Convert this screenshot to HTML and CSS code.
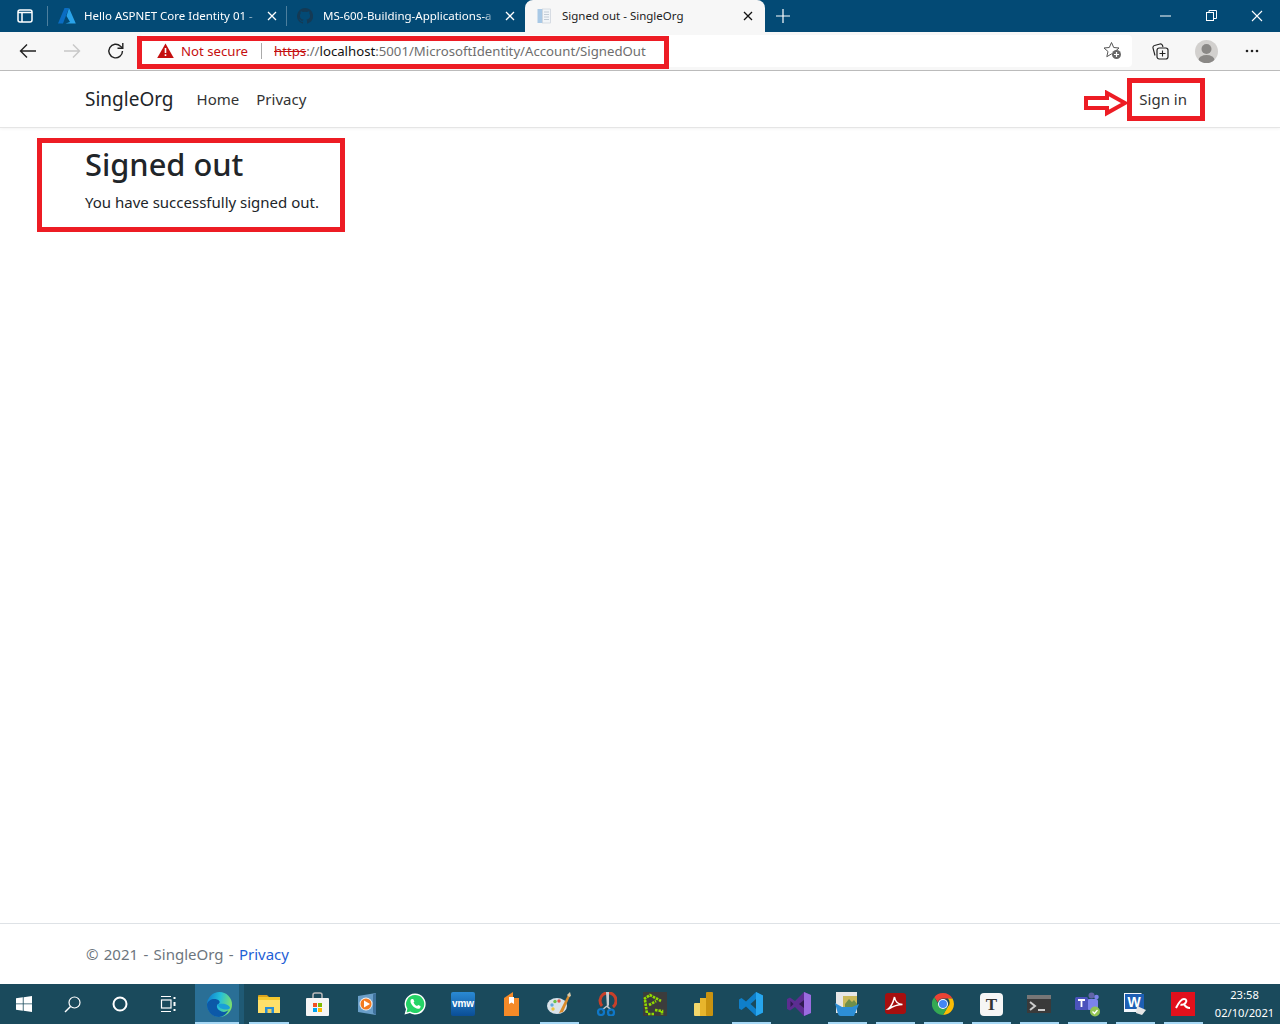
FILE: index.html
```html
<!DOCTYPE html>
<html lang="en">

<head>
	<meta charset="UTF-8">
	<title>Signed out - SingleOrg</title>
	<link rel="stylesheet" href="styles.css">
</head>

<body>
	<div class="tabstrip">
		<svg class="tabs-menu" width="16" height="14" viewBox="0 0 16 14"><rect x="1" y="1" width="14" height="12" rx="2" fill="none" stroke="#fff" stroke-width="1.5"/><path d="M1 3.5h14M5 3.5V13" stroke="#fff" stroke-width="1.5" fill="none"/></svg>
		<div class="tab-sep"></div>
		<div class="tab tab-first">
			<svg width="18" height="16" viewBox="0 0 18 16"><path d="M6.500 0h4.400L5 15.500H0z" fill="#0a6cc2"/><path d="M11 0l6.800 15.500H7.500L12 14 8.500 8z" fill="#2aa3ea"/></svg>
			<span class="tab-title tab-fade">Hello ASPNET Core Identity 01 -</span>
			<svg class="tab-close" width="10" height="10" viewBox="0 0 10 10"><path d="M1 1l8 8M9 1L1 9" stroke="#fff" stroke-width="1.300"/></svg>
		</div>
		<div class="tab-sep"></div>
		<div class="tab tab-second">
			<svg width="16" height="16" viewBox="0 0 16 16"><path d="M8 0a8 8 0 0 0-2.500 15.600c.4 0 .5-.2.5-.4v-1.400c-2.200.5-2.700-1-2.700-1-.4-.9-.9-1.200-.9-1.200-.7-.5.100-.5.100-.5.800.100 1.200.8 1.200.8.700 1.200 1.900.9 2.300.7.100-.5.300-.9.500-1.100-1.800-.2-3.600-.9-3.600-4 0-.9.300-1.600.8-2.100-.1-.2-.4-1 .1-2.100 0 0 .7-.2 2.200.8a7.600 7.600 0 0 1 4 0c1.500-1 2.200-.8 2.200-.8.400 1.100.2 1.900.1 2.100.5.600.8 1.300.8 2.100 0 3.100-1.900 3.800-3.700 4 .3.300.6.800.6 1.500v2.200c0 .2.100.5.600.4A8 8 0 0 0 8 0z" fill="#143a55"/></svg>
			<span class="tab-title tab-fade">MS-600-Building-Applications-a</span>
			<svg class="tab-close" width="10" height="10" viewBox="0 0 10 10"><path d="M1 1l8 8M9 1L1 9" stroke="#fff" stroke-width="1.300"/></svg>
		</div>
		<div class="tab tab-active">
			<svg width="16" height="16" viewBox="0 0 16 16"><rect x="0.500" y="1" width="5" height="14" fill="#a9c9e6"/><rect x="5.500" y="1" width="8" height="14" fill="#f2f5f8" stroke="#c3ccd6" stroke-width="0.600"/><path d="M7 4h5M7 6.500h5M7 9h5M7 11.500h5" stroke="#c3ccd6"/></svg>
			<span class="tab-title">Signed out - SingleOrg</span>
			<svg class="tab-close" width="10" height="10" viewBox="0 0 10 10"><path d="M1 1l8 8M9 1L1 9" stroke="#111" stroke-width="1.300"/></svg>
		</div>
		<svg class="new-tab" width="14" height="14" viewBox="0 0 14 14"><path d="M7 0v14M0 7h14" stroke="#fff" stroke-width="1.200"/></svg>
		<div class="window-controls">
			<svg width="46" height="14" viewBox="0 0 46 14"><path d="M1 7h11" stroke="#fff" stroke-width="1"/></svg>
			<svg width="46" height="14" viewBox="0 0 46 14"><rect x="1.500" y="3.500" width="7" height="8" fill="none" stroke="#fff"/><path d="M4 3.500V1.500h7.500v8H9" fill="none" stroke="#fff"/></svg>
			<svg width="12" height="14" viewBox="0 0 12 14"><path d="M1 2l10 10M11 2L1 12" stroke="#fff" stroke-width="1.100"/></svg>
		</div>
	</div>

	<div class="toolbar">
		<svg class="nav-icon" width="18" height="16" viewBox="0 0 18 16"><path d="M17 8H1.500M8 1.500L1.500 8 8 14.500" fill="none" stroke="#222" stroke-width="1.400"/></svg>
		<svg class="nav-icon" width="18" height="16" viewBox="0 0 18 16"><path d="M1 8h15.500M10 1.500L16.500 8 10 14.500" fill="none" stroke="#c8c8c8" stroke-width="1.400"/></svg>
		<svg class="nav-icon" width="18" height="18" viewBox="0 0 18 18"><path d="M15.500 9a6.800 6.800 0 1 1-2-4.800L15.500 6" fill="none" stroke="#222" stroke-width="1.400"/><path d="M15.800 1v5.300h-5.300" fill="none" stroke="#222" stroke-width="1.400"/></svg>
		<div class="address">
			<svg class="warn-icon" width="17" height="15" viewBox="0 0 17 15"><path d="M8.500 0.500L16.800 15H.2z" fill="#c50f0f"/><path d="M8.500 5v5M8.500 11.200v1.800" stroke="#fff" stroke-width="1.600"/></svg>
			<span class="not-secure">Not secure</span>
			<span class="address-sep"></span>
			<span class="url"><s class="url-scheme">https</s><span class="url-dim">://</span><span class="url-host">localhost</span><span class="url-dim">:5001/MicrosoftIdentity/Account/SignedOut</span></span>
			<svg class="fav-icon" width="19" height="19" viewBox="0 0 19 19"><path d="M8.500 1.500l2.200 5 5.300.5-4 3.500 1.200 5.200-4.700-2.800-4.700 2.800 1.200-5.200-4-3.500 5.300-.5z" fill="none" stroke="#555" stroke-width="1"/><circle cx="13.500" cy="13.500" r="4.500" fill="#666"/><path d="M13.500 11v5M11 13.500h5" stroke="#fff" stroke-width="1.200"/></svg>
		</div>
		<svg class="tool-icon" width="17" height="17" viewBox="0 0 17 17"><path d="M3 12.500L1 5a2 2 0 0 1 1.500-2.500L8 1a2 2 0 0 1 2.500 1.500L11 4" fill="none" stroke="#222" stroke-width="1.100"/><rect x="5" y="5" width="11" height="11" rx="2.200" fill="#f7f7f7" stroke="#222" stroke-width="1.200"/><path d="M10.500 7.500v6M7.500 10.500h6" stroke="#222" stroke-width="1.100"/></svg>
		<svg class="avatar" width="23" height="23" viewBox="0 0 23 23"><defs><clipPath id="avatar-clip"><circle cx="11.500" cy="11.500" r="11.500"/></clipPath></defs><circle cx="11.500" cy="11.500" r="11.500" fill="#d2d0ce"/><g clip-path="url(#avatar-clip)"><circle cx="11.500" cy="9" r="5" fill="#8a8886"/><ellipse cx="11.500" cy="20" rx="8" ry="5" fill="#8a8886"/></g></svg>
		<svg class="tool-icon tool-more" width="14" height="4" viewBox="0 0 14 4"><circle cx="2" cy="2" r="1.300" fill="#222"/><circle cx="7" cy="2" r="1.300" fill="#222"/><circle cx="12" cy="2" r="1.300" fill="#222"/></svg>
	</div>

	<nav class="navbar">
		<a class="brand">SingleOrg</a>
		<a class="nav-link">Home</a>
		<a class="nav-link">Privacy</a>
		<a class="nav-link nav-signin">Sign in</a>
	</nav>

	<main class="content">
		<h1>Signed out</h1>
		<p>You have successfully signed out.</p>
	</main>

	<footer class="footer">© 2021 - SingleOrg - <a>Privacy</a></footer>

	<div class="taskbar">
		<div class="task"><svg width="16" height="16" viewBox="0 0 16 16"><path d="M0 2.300L6.800 1.300V7.500H0zM7.600 1.200L16 0V7.500H7.600zM0 8.300H6.800V14.700L0 13.700zM7.600 8.300H16V16L7.600 14.800z" fill="#fff"/></svg></div>
		<div class="task"><svg width="17" height="17" viewBox="0 0 17 17"><circle cx="10.500" cy="6.500" r="5.500" fill="none" stroke="#fff" stroke-width="1.200"/><path d="M6.500 10.500L1 16" stroke="#fff" stroke-width="1.400"/></svg></div>
		<div class="task"><svg width="16" height="16" viewBox="0 0 16 16"><circle cx="8" cy="8" r="6.500" fill="none" stroke="#fff" stroke-width="2"/></svg></div>
		<div class="task"><svg width="16" height="16" viewBox="0 0 16 16"><path d="M1 .5h10M1 15.500h10" stroke="#fff"/><rect x="1.500" y="4" width="9.500" height="8" fill="none" stroke="#fff" stroke-width="1.200"/><rect x="13.500" y="1" width="2" height="2" fill="#fff"/><rect x="13.500" y="6" width="2" height="4" fill="#fff"/><rect x="13.500" y="13" width="2" height="2" fill="#fff"/></svg></div>
		<div class="task task-first task-wide task-current"><svg width="25" height="25" viewBox="0 0 25 25"><defs><linearGradient id="edge-a" x1="0" y1="0.300" x2="1" y2="0.500"><stop offset="0" stop-color="#0f7fd0"/><stop offset="0.500" stop-color="#25c0d8"/><stop offset="1" stop-color="#7ee06a"/></linearGradient></defs><circle cx="12.500" cy="12.500" r="12.500" fill="url(#edge-a)"/><path d="M0 12.500C1 8 6 6 10 7.500c4 1.500 3 4 .5 5-1.500 2 0 5.500 4 7 3 1 5.500 0 7-1.500-2 4-5.500 7-9.500 7C5 25 0 19 0 12.500z" fill="#0c59a8"/><path d="M10.500 12.500c2.500-1 8-1.500 11.500 1.500 2 2 .5 3.500-2.500 3.500-4.500 0-8-2-9-5z" fill="#1a9fd8"/></svg></div>
		<div class="task task-wide task-running"><svg width="22" height="20" viewBox="0 0 22 20"><path d="M0 2a1 1 0 0 1 1-1h8l2 2h-11z" fill="#d9a21d"/><rect y="3" width="22" height="15" fill="#f5c92f"/><rect y="6" width="22" height="13" fill="#ffe06a"/><rect x="7" y="13" width="9" height="6" fill="#2a8ed6"/><rect x="9.500" y="15" width="4" height="4" fill="#f3d25a"/></svg></div>
		<div class="task task-wide"><svg width="23" height="24" viewBox="0 0 23 24"><path d="M7 6V3a2 2 0 0 1 2-2h5a2 2 0 0 1 2 2v3" fill="none" stroke="#bbb" stroke-width="1.500"/><rect y="6" width="23" height="18" rx="1" fill="#f5f5f5"/><rect x="7" y="11" width="4" height="4" fill="#f25022"/><rect x="12" y="11" width="4" height="4" fill="#7fba00"/><rect x="7" y="16" width="4" height="4" fill="#00a4ef"/><rect x="12" y="16" width="4" height="4" fill="#ffb900"/></svg></div>
		<div class="task task-wide"><svg width="20" height="22" viewBox="0 0 20 22"><path d="M1 3l18-3v22L1 19z" fill="#6a9fc9"/><path d="M16 1.500L19 0v22l-3-2z" fill="#3f729c"/><circle cx="9" cy="11" r="6.500" fill="#f0f0f0"/><circle cx="9" cy="11" r="5.500" fill="#f47b20"/><path d="M7 7.500v7l6-3.500z" fill="#fff"/></svg></div>
		<div class="task"><svg width="22" height="22" viewBox="0 0 22 22"><path d="M11 .5a10.500 10.500 0 0 0-9 15.800L.5 21.500l5.400-1.400A10.500 10.500 0 1 0 11 .5z" fill="#fff"/><path d="M11 2a9 9 0 0 0-7.600 13.800L2.500 19.500l3.800-1A9 9 0 1 0 11 2z" fill="#25d366"/><path d="M7.800 6c-.5 0-1.300.8-1.300 2.300 0 3 3.800 7 7.500 7.500 1.500.1 2.500-1 2.500-1.800v-.9l-2.400-1.200-1 1.200c-1.500-.5-3-2-3.600-3.500l.9-1L9.200 6z" fill="#fff"/></svg></div>
		<div class="task"><svg width="24" height="24" viewBox="0 0 24 24"><defs><linearGradient id="vmw-bg" x1="0" y1="0" x2="0" y2="1"><stop offset="0" stop-color="#2a8ad4"/><stop offset="1" stop-color="#0a4e96"/></linearGradient></defs><rect width="24" height="24" rx="2" fill="url(#vmw-bg)"/><text x="12" y="15" class="icon-text icon-vmw">vmw</text></svg></div>
		<div class="task"><svg width="15" height="24" viewBox="0 0 15 24"><path d="M0 6l9-6v6h6v18H0z" fill="#f58a28"/><path d="M5 5h5v7l-2.500-1.500L5 12z" fill="#fff"/></svg></div>
		<div class="task task-running"><svg width="24" height="24" viewBox="0 0 24 24"><ellipse cx="10" cy="14" rx="10" ry="8" fill="#d9e3ea"/><circle cx="5" cy="13" r="1.700" fill="#62a8dc"/><circle cx="8" cy="9.500" r="1.700" fill="#6cc04a"/><circle cx="12" cy="9" r="1.700" fill="#e2574c"/><circle cx="6" cy="17" r="1.700" fill="#f0c33c"/><path d="M12 21L21 3l2 1-7 16z" fill="#d98a2b"/><path d="M20 3l3-3 1 4-2 1z" fill="#d9c9a8"/></svg></div>
		<div class="task"><svg width="20" height="24" viewBox="0 0 20 24"><path d="M5 14A8 8 0 1 1 16 15" fill="none" stroke="#c8402a" stroke-width="3"/><path d="M9 0h3v13l-2 3z" fill="#c8ccd0"/><path d="M10 14L5 18M10 14l4 4" stroke="#c8ccd0" stroke-width="1.500"/><circle cx="4" cy="20" r="3" fill="none" stroke="#0f78c9" stroke-width="2.200"/><circle cx="14" cy="20.500" r="3" fill="none" stroke="#0f78c9" stroke-width="2.200"/></svg></div>
		<div class="task"><svg width="24" height="24" viewBox="0 0 24 24"><rect width="24" height="24" fill="#3c3c3c"/><path d="M1 7L7 3l11 6M2 8l2 14M6 13l7-4M12 18l7 1v4M5 22h6" fill="none" stroke="#8fdc00" stroke-width="2.600" stroke-dasharray="2.500 1"/></svg></div>
		<div class="task"><svg width="19" height="24" viewBox="0 0 19 24"><rect y="11" width="8" height="13" rx="1" fill="#f2d76b"/><rect x="6" y="6" width="7" height="18" fill="#e8b52c"/><rect x="12" y="0" width="7" height="24" rx="1" fill="#c99310"/></svg></div>
		<div class="task task-running"><svg width="24" height="24" viewBox="0 0 24 24"><path d="M17 0l7 3.500v17L17 24 7 14.500 2.500 18 0 16.500V7.500L2.500 6 7 9.500z" fill="#0f7fc9"/><path d="M17 0l7 3.500v17L17 24z" fill="#27a6ee"/><path d="M17 7l-5.500 5 5.500 5z" fill="#1a4a5c"/></svg></div>
		<div class="task"><svg width="24" height="24" viewBox="0 0 24 24"><path d="M17 0l7 3v18l-7 3-9-9-5 3.500L0 17V7l3-1.500L8 9z" fill="#5c2d91"/><path d="M17 0l7 3v18l-7 3z" fill="#9a6ce0"/><path d="M3.500 9v6l3-3zM12 12l5 4V8z" fill="#2f1b52"/></svg></div>
		<div class="task task-running"><svg width="24" height="24" viewBox="0 0 24 24"><rect x="1" y="0" width="21" height="21" fill="#e7e7e7"/><rect x="8" y="4" width="14" height="11" fill="#cbb95a"/><path d="M10 12l4-5 3 3 2-2 3 4v3H10z" fill="#6f8f4a"/><path d="M0 11l3 11a3 3 0 0 0 3 2h13l5-12-7 3H7z" fill="#2d8fd6"/></svg></div>
		<div class="task task-running"><svg width="21" height="24" viewBox="0 0 21 24"><rect width="21" height="21" y="1" rx="3" fill="#a60f0f"/><path d="M3 17c3-2 5-6 6.500-12 .5 4 3 7 8 7.500-5 0-9 1.500-14 4.500z" fill="none" stroke="#fff" stroke-width="1.500"/></svg></div>
		<div class="task task-running"><svg width="22" height="22" viewBox="0 0 22 22"><path d="M11 0a11 11 0 0 1 9.500 5.500H11a5.500 5.500 0 0 0-5.200 3.700L2.300 4.200A11 11 0 0 1 11 0z" fill="#ea4335"/><path d="M20.500 5.500A11 11 0 0 1 11 22l4.800-8.200a5.500 5.500 0 0 0 0-8.300z" fill="#fbbc05"/><path d="M11 22A11 11 0 0 1 2.300 4.200L7 12.500a5 5 0 0 0 8.800 1.300z" fill="#34a853"/><circle cx="11" cy="11" r="5" fill="#fff"/><circle cx="11" cy="11" r="4" fill="#4285f4"/></svg></div>
		<div class="task task-running"><svg width="23" height="23" viewBox="0 0 23 23"><rect width="23" height="23" rx="4" fill="#f6f6f6"/><text x="11.500" y="17" class="icon-text icon-typora">T</text></svg></div>
		<div class="task task-running"><svg width="24" height="18" viewBox="0 0 24 18"><rect width="24" height="18" fill="#3a3a3a"/><rect width="24" height="4" fill="#777"/><path d="M3 7l5 4-5 4" fill="none" stroke="#ccc" stroke-width="2"/><path d="M11 15h7" stroke="#ccc" stroke-width="2"/></svg></div>
		<div class="task task-running"><svg width="25" height="25" viewBox="0 0 25 25"><circle cx="16.500" cy="3.500" r="3" fill="#6264a7"/><circle cx="21.500" cy="5" r="2.300" fill="#7b83eb"/><rect x="12" y="7" width="11" height="11" rx="2" fill="#7b83eb"/><rect y="5" width="13" height="13" rx="1.500" fill="#4b53bc"/><path d="M3 8h7M6.500 8v7" stroke="#fff" stroke-width="1.800"/><circle cx="20" cy="19.500" r="5" fill="#92c353"/><path d="M17.500 19.500l2 2 3-3.500" fill="none" stroke="#fff" stroke-width="1.300"/></svg></div>
		<div class="task task-running"><svg width="23" height="22" viewBox="0 0 23 22"><path d="M0 0h17l3 3v16H0z" fill="#f4f8fd"/><rect x="1" y="1" width="19" height="15" fill="#1d5fb4"/><text x="10" y="14" class="icon-text icon-word">W</text><path d="M13 13l9 4-4 5-6-2z" fill="#e6e6e6"/></svg></div>
		<div class="task task-running"><svg width="24" height="24" viewBox="0 0 24 24"><rect width="24" height="24" fill="#e2101c"/><path d="M5 16c2-4 5-9 8-9 2.500 0 3 2 1.500 4-1.500 1.500-4 2-5 1.500M13 12c1 2 3 4 6 4" fill="none" stroke="#fff" stroke-width="2"/></svg></div>
		<div class="clock">
			<span>23:58</span>
			<span>02/10/2021</span>
		</div>
	</div>

	<div class="mark mark-url"></div>
	<div class="mark mark-signin"></div>
	<div class="mark mark-signed"></div>
	<svg class="mark-arrow" width="45" height="27" viewBox="0 0 45 27"><path d="M2 8h21V3l18 10-18 10v-5H2z" fill="#fff" stroke="#ed1c24" stroke-width="4"/></svg>
</body>

</html>
```

FILE: styles.css
```css
* {
	box-sizing: border-box;
}

body {
	margin: 0;
	height: 1024px;
	overflow: hidden;
	display: flex;
	flex-direction: column;
	font-family: "Noto Sans", Arial, sans-serif;
	color: #212529;
	background-color: #fff;
}

a {
	text-decoration: none;
}

/* browser chrome */
.tabstrip {
	height: 32px;
	display: flex;
	align-items: center;
	background-color: #034a75;
	color: #fff;
	font-size: 11.500px;
}

.tabs-menu {
	margin: 0 14px 0 17px;
}

.tab-sep {
	width: 1px;
	height: 20px;
	background-color: #4d7f9e;
}

.tab {
	height: 32px;
	display: flex;
	align-items: center;
}

.tab-first {
	width: 238px;
	padding: 0 9px 0 10px;
}

.tab-second {
	width: 238px;
	padding: 0 10px;
}

.tab-active {
	width: 240px;
	padding: 0 12px;
	color: #222;
	background-color: #f7f7f7;
	border-radius: 8px 8px 0 0;
}

.tab-title {
	flex: 1;
	margin-left: 8px;
	padding-bottom: 2px;
	white-space: nowrap;
}

.tab-fade {
	-webkit-mask-image: linear-gradient(to left, transparent 0, #000 14px);
	mask-image: linear-gradient(to left, transparent 0, #000 14px);
}

.tab-second .tab-title {
	margin-left: 10px;
}

.tab-active .tab-title {
	margin-left: 9px;
}

.tab-close {
	margin-left: 8px;
}

.new-tab {
	margin-left: 11px;
}

.window-controls {
	margin-left: auto;
	margin-right: 17px;
	display: flex;
	align-items: center;
}

.toolbar {
	height: 39px;
	display: flex;
	align-items: center;
	padding-left: 19px;
	background-color: #f7f7f7;
	border-bottom: 1px solid #bdbdbd;
}

.nav-icon {
	margin-right: 26px;
}

.address {
	width: 993px;
	height: 32px;
	margin-left: -12px;
	display: flex;
	align-items: center;
	padding: 0 10px 1px 18px;
	background-color: #fff;
	border-radius: 4px;
	font-size: 13.200px;
}

.warn-icon {
	flex-shrink: 0;
}

.not-secure {
	margin-left: 7px;
	color: #c50f0f;
}

.address-sep {
	width: 1px;
	height: 16px;
	margin: 0 12px 0 13px;
	background-color: #aaa;
}

.url {
	flex: 1;
	white-space: nowrap;
}

.url-scheme {
	color: #c50f0f;
}

.url-dim {
	color: #6e6e6e;
}

.url-host {
	color: #111;
}

.tool-icon {
	flex-shrink: 0;
	margin-left: 20px;
}

.avatar {
	flex-shrink: 0;
	margin-left: 26px;
}

.tool-more {
	margin-left: 27px;
}

/* page */
.navbar {
	height: 57px;
	display: flex;
	align-items: center;
	padding: 0 75px 0 85px;
	border-bottom: 1px solid #e5e5e5;
	box-shadow: 0 1px 3px rgba(0, 0, 0, .05);
}

.brand {
	margin-right: 23px;
	font-size: 19px;
}

.nav-link {
	margin-right: 17px;
	font-size: 15px;
	color: #333;
}

.nav-signin {
	margin-left: auto;
	margin-right: 18px;
}

.content {
	flex: 1;
	padding: 15px 85px 0;
}

h1 {
	margin: 0 0 5px;
	font-size: 30.800px;
	font-weight: 500;
	line-height: 42px;
}

p {
	margin: 0;
	font-size: 15px;
	line-height: 24px;
}

.footer {
	height: 61px;
	padding: 19px 0 0 86px;
	border-top: 1px solid #dee2e6;
	font-size: 15px;
	word-spacing: 1.400px;
	line-height: 22px;
	color: #6c757d;
}

.footer a {
	color: #1f5fd6;
}

/* windows taskbar */
.taskbar {
	height: 40px;
	display: flex;
	background-color: #1a4a5c;
	color: #fff;
}

.task {
	width: 48px;
	height: 40px;
	flex-shrink: 0;
	display: flex;
	align-items: center;
	justify-content: center;
	position: relative;
}

.task-wide {
	width: 49px;
}

.task-first {
	margin-left: 3px;
}

.task-current {
	background: linear-gradient(to right, #2a6f96 44px, #1f5a75 44px);
}

.task-running::after,
.task-current::after {
	content: "";
	position: absolute;
	left: 5px;
	right: 4px;
	bottom: 0;
	height: 2px;
	background-color: #a6d8f5;
}

.task-current::after {
	left: 0;
	right: 5px;
}

.icon-text {
	text-anchor: middle;
	font-weight: 700;
}

.icon-vmw {
	font-family: "Liberation Sans", sans-serif;
	font-size: 10px;
	fill: #fff;
}

.icon-typora {
	font-family: "Liberation Serif", serif;
	font-size: 17px;
	fill: #333;
}

.icon-word {
	font-family: "Liberation Sans", sans-serif;
	font-size: 14px;
	fill: #fff;
}

.clock {
	flex: 1;
	display: flex;
	flex-direction: column;
	align-items: center;
	justify-content: center;
	gap: 2px;
	padding-left: 2px;
	font-size: 11.200px;
	line-height: 16px;
}

/* red annotations drawn over the screenshot */
.mark {
	position: absolute;
	border: 5px solid #ed1c24;
}

.mark-url {
	left: 137px;
	top: 36px;
	width: 532px;
	height: 33px;
}

.mark-signin {
	left: 1127px;
	top: 78px;
	width: 78px;
	height: 43px;
}

.mark-signed {
	left: 37px;
	top: 138px;
	width: 308px;
	height: 94px;
}

.mark-arrow {
	position: absolute;
	left: 1084px;
	top: 90px;
}
```
